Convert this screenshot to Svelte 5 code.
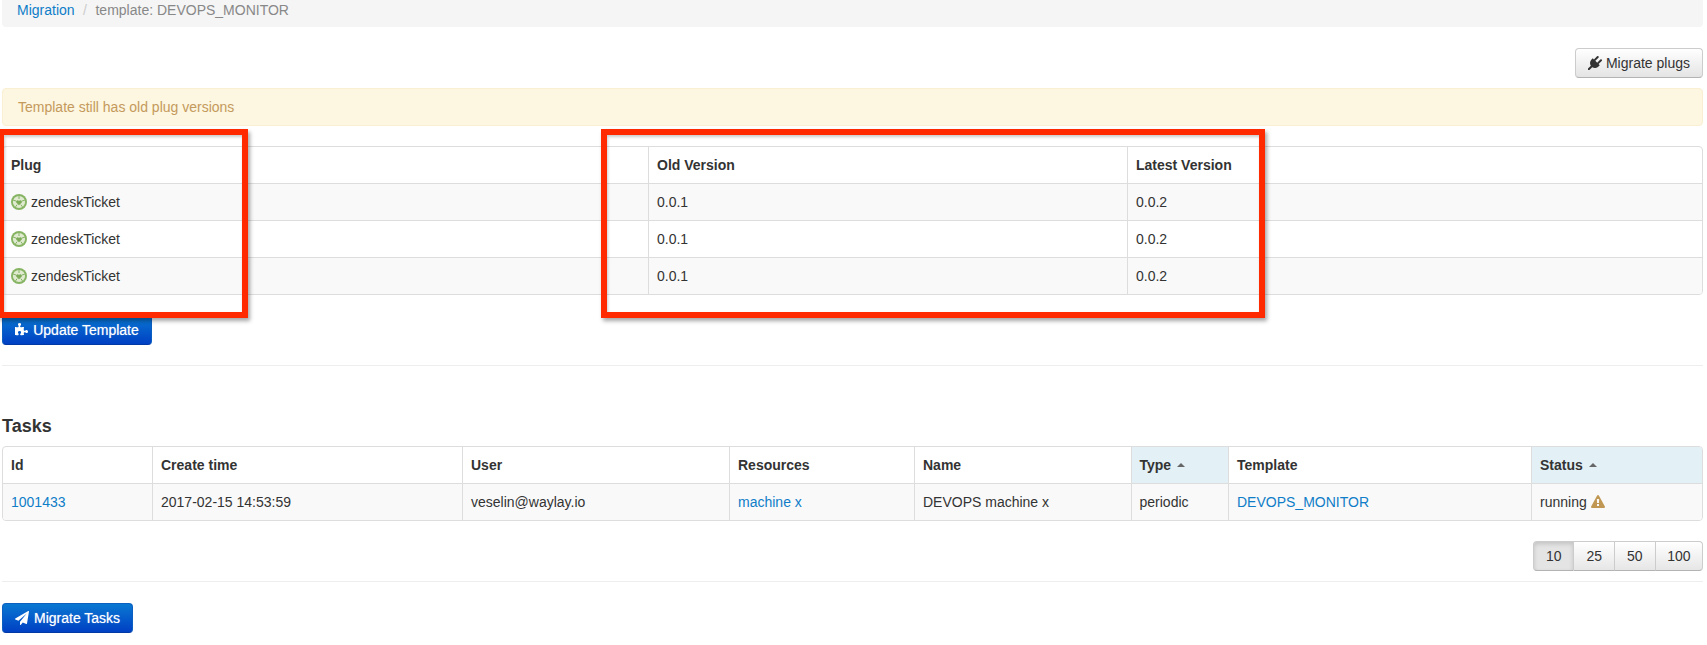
<script>
  const plugRows = [1, 2, 3];
  const plugIcon = "M1755 453q37 38 37 90.5t-37 90.5l-401 400 150 150-160 160q-163 163-389.5 186.5t-411.5-100.5l-362 362h-181v-181l362-362q-124-185-100.5-411.5t186.5-389.5l160-160 150 150 400-401q38-37 91-37t90 37 37 90.5-37 90.5l-400 401 234 234 401-400q38-37 91-37t90 37z";
  const puzzleIcon = "M1664 1098q0 81-44.5 135t-123.5 54q-41 0-77.5-17.5t-59-38-56.5-38-71-17.5q-110 0-110 124 0 39 16 115t15 115v5q-22 0-33 1-34 3-97.5 11.5t-115.5 13.5-98 5q-61 0-103-26.5t-42-83.5q0-37 17.5-71t38-56.5 38-59 17.5-77.5q0-79-54-123.5t-135-44.5q-84 0-143 45.5t-59 127.5q0 43 15 83t33.5 64.5 33.5 53 15 50.5q0 45-46 89-37 35-117 35-95 0-245-24-9-2-27.5-4t-27.5-4l-13-2q-1 0-3-1-2 0-2-1v-1024q2 1 17.5 3.5t34 5 21.5 3.5q150 24 245 24 80 0 117-35 46-44 46-89 0-22-15-50.5t-33.5-53-33.5-64.5-15-83q0-82 59-127.5t144-45.5q80 0 134 44.5t54 123.5q0 41-17.5 77.5t-38 59-38 56.5-17.5 71q0 57 42 83.5t103 26.5q64 0 180-15t163-17v2q-1 2-3.5 17.5t-5 34-3.5 21.5q-24 150-24 245 0 80 35 117 44 46 89 46 22 0 50.5-15t53-33.5 64.5-33.5 83-15q82 0 127.5 59t45.5 143z";
  const planeIcon = "M1764 11q33 24 27 64l-256 1536q-5 29-32 45-14 8-31 8-11 0-24-5l-453-185-242 295q-18 23-49 23-13 0-22-4-19-7-30.5-23.5t-11.5-36.5v-349l864-1059-1069 925-395-162q-37-14-40-55-2-40 32-59l1664-960q15-9 32-9 20 0 36 11z";
  const warnIcon = "M1024 1375v-190q0-14-9.5-23.5t-22.5-9.5h-192q-13 0-22.5 9.5t-9.5 23.5v190q0 14 9.5 23.5t22.5 9.5h192q13 0 22.5-9.5t9.5-23.5zm-2-374l18-459q0-12-10-19-13-11-24-11h-220q-11 0-24 11-10 7-10 21l17 457q0 10 10 16.5t24 6.5h185q14 0 23.5-6.5t10.5-16.5zm-14-934l768 1408q35 63-2 126-17 29-46.5 46t-63.5 17h-1536q-34 0-63.5-17t-46.5-46q-37-63-2-126l768-1408q17-31 47-49t65-18 65 18 47 49z";
</script>

<div class="page">
  <nav class="crumb">
    <a href="#m">Migration</a><span class="sep">/</span><span class="cur">template: DEVOPS_MONITOR</span>
  </nav>

  <div class="toolbar">
    <button class="btn">
      <svg class="ico" viewBox="0 0 1792 1792"><path d={plugIcon} fill="#333" /></svg>
      Migrate plugs
    </button>
  </div>

  <div class="alert">Template still has old plug versions</div>

  <div class="tbl plugs">
    <table>
      <colgroup><col class="p1" /><col class="p2" /><col /></colgroup>
      <thead><tr><th>Plug</th><th>Old Version</th><th>Latest Version</th></tr></thead>
      <tbody>
        {#each plugRows as r (r)}
          <tr>
            <td>
              <div class="plugname">
                <svg class="plugico" viewBox="0 0 16 16">
                  <circle cx="8" cy="8" r="8" fill="#86b463" />
                  <circle cx="8" cy="8" r="6.1" fill="#dfead0" />
                  <path d="M8 1.8V5M13.9 6.1 11 7M11.6 13 9.8 10.6M4.4 13l1.8-2.4M2.1 6.1 5 7" stroke="#86b463" stroke-width="1" fill="none" />
                  <path d="M8 11.2 5.2 8.4C4.4 6.8 6.8 5.4 8 7c1.2-1.6 3.6-.2 2.8 1.4z" fill="#7dab58" />
                </svg>
                zendeskTicket
              </div>
            </td>
            <td>0.0.1</td>
            <td>0.0.2</td>
          </tr>
        {/each}
      </tbody>
    </table>
  </div>

  <button class="btn primary update">
    <svg class="ico" viewBox="0 0 1792 1792"><path d={puzzleIcon} fill="#fff" /></svg>
    Update Template
  </button>

  <hr class="hr1" />

  <h4>Tasks</h4>

  <div class="tbl tasks">
    <table>
      <colgroup>
        <col class="t1" /><col class="t2" /><col class="t3" /><col class="t4" />
        <col class="t5" /><col class="t6" /><col class="t7" /><col />
      </colgroup>
      <thead>
        <tr>
          <th>Id</th><th>Create time</th><th>User</th><th>Resources</th><th>Name</th>
          <th class="sorted">Type <span class="caret"></span></th>
          <th>Template</th>
          <th class="sorted">Status <span class="caret"></span></th>
        </tr>
      </thead>
      <tbody>
        <tr>
          <td><a href="#t">1001433</a></td>
          <td>2017-02-15 14:53:59</td>
          <td>veselin@waylay.io</td>
          <td><a href="#r">machine x</a></td>
          <td>DEVOPS machine x</td>
          <td>periodic</td>
          <td><a href="#d">DEVOPS_MONITOR</a></td>
          <td>running <svg class="warn" viewBox="0 0 1792 1792"><path d={warnIcon} fill="#c09853" /></svg></td>
        </tr>
      </tbody>
    </table>
  </div>

  <div class="pager">
    <div class="group">
      <button class="pg active">10</button><button class="pg">25</button><button class="pg">50</button><button class="pg">100</button>
    </div>
  </div>

  <hr class="hr2" />

  <button class="btn primary tasksbtn">
    <svg class="ico" viewBox="0 0 1792 1792"><path d={planeIcon} fill="#fff" /></svg>
    Migrate Tasks
  </button>

  <div class="mark m1"></div>
  <div class="mark m2"></div>
</div>

<style>
  :global(body) {
    margin: 0;
    background: #fff;
    overflow: hidden;
  }
  .page {
    position: relative;
    box-sizing: border-box;
    width: 1707px;
    height: 645px;
    padding: 0 4px 0 2px;
    overflow: hidden;
    font-family: "Liberation Sans", Arial, sans-serif;
    font-size: 14px;
    line-height: 20px;
    color: #333;
  }
  a {
    color: #0f7dc8;
    text-decoration: none;
  }
  .crumb {
    height: 20px;
    padding: 0 15px 7px;
    background: #f5f5f5;
    border-radius: 0 0 4px 4px;
  }
  .sep {
    padding: 0 8.5px;
    color: #ccc;
  }
  .cur {
    color: #888;
  }
  .toolbar {
    display: flex;
    justify-content: flex-end;
    margin-top: 21px;
  }
  .btn {
    display: inline-flex;
    align-items: center;
    justify-content: center;
    gap: 4px;
    box-sizing: border-box;
    height: 30px;
    padding: 0 12px;
    font: inherit;
    white-space: nowrap;
    color: #333;
    background: linear-gradient(#fff, #e4e4e4);
    border: 1px solid #ccc;
    border-bottom-color: #b3b3b3;
    border-radius: 4px;
  }
  .btn.primary {
    color: #fff;
    font-weight: 400;
    background: linear-gradient(#0a78d2, #0040c4);
    border-color: #0a5fc0 #0a5fc0 #0038a8;
    text-shadow: 0 0 1px rgba(255, 255, 255, 0.6);
  }
  .tasksbtn {
    gap: 5px;
  }
  .ico {
    width: 14px;
    height: 14px;
    flex: none;
  }
  .alert {
    box-sizing: border-box;
    height: 38px;
    margin-top: 10px;
    padding: 8px 15px;
    color: #c49a5c;
    background: #fdf6e0;
    border: 1px solid #faefd3;
    border-radius: 4px;
  }
  .tbl {
    border: 1px solid #ddd;
    border-radius: 4px;
    overflow: hidden;
  }
  .plugs {
    margin-top: 20px;
  }
  table {
    width: 100%;
    table-layout: fixed;
    border-collapse: separate;
    border-spacing: 0;
  }
  th,
  td {
    box-sizing: content-box;
    padding: 8px;
    text-align: left;
    height: 20px;
    white-space: nowrap;
    vertical-align: top;
  }
  th {
    font-weight: 700;
  }
  th + th,
  td + td {
    border-left: 1px solid #ddd;
  }
  td {
    border-top: 1px solid #ddd;
  }
  tbody tr:nth-child(odd) td {
    background: #f9f9f9;
  }
  .p1 {
    width: 645px;
  }
  .p2 {
    width: 479px;
  }
  .plugname {
    display: flex;
    align-items: center;
    gap: 4px;
    height: 20px;
  }
  .plugico {
    width: 16px;
    height: 16px;
    flex: none;
  }
  .update {
    margin-top: 20px;
    width: 150px;
    display: flex;
  }
  hr {
    border: 0;
    border-top: 1px solid #eee;
    margin: 0;
  }
  .hr1 {
    margin-top: 20px;
  }
  h4 {
    margin: 50px 0 10px;
    font-size: 18px;
    line-height: 20px;
    font-weight: 700;
    color: #333;
  }
  .t1 {
    width: 149px;
  }
  .t2 {
    width: 310px;
  }
  .t3 {
    width: 267px;
  }
  .t4 {
    width: 185px;
  }
  .t5 {
    width: 216.5px;
  }
  .t6 {
    width: 97.5px;
  }
  .t7 {
    width: 303px;
  }
  th.sorted {
    background: #e3f0f6;
  }
  .caret {
    display: inline-block;
    width: 0;
    height: 0;
    margin-left: 2px;
    vertical-align: 3px;
    border-left: 4px solid transparent;
    border-right: 4px solid transparent;
    border-bottom: 4px solid #666;
  }
  .warn {
    width: 14px;
    height: 14px;
    vertical-align: -2px;
  }
  .pager {
    display: flex;
    justify-content: flex-end;
    margin-top: 20px;
  }
  .group {
    display: flex;
  }
  .pg {
    box-sizing: border-box;
    height: 30px;
    padding: 0 12px;
    font: inherit;
    color: #333;
    background: linear-gradient(#fff, #e6e6e6);
    border: 1px solid #ccc;
    border-bottom-color: #b3b3b3;
    border-left-width: 0;
  }
  .pg:first-child {
    border-left-width: 1px;
    border-radius: 4px 0 0 4px;
  }
  .pg:last-child {
    border-radius: 0 4px 4px 0;
    padding: 0 11.5px;
  }
  .pg.active {
    background: #e4e4e4;
    box-shadow: inset 0 2px 4px rgba(0, 0, 0, 0.15);
  }
  .hr2 {
    margin: 10px 0 21px;
  }
  .mark {
    position: absolute;
    box-sizing: border-box;
    top: 129px;
    height: 189px;
    border: 6px solid #ff2a00;
    box-shadow: 2px 3px 4px rgba(0, 0, 0, 0.35), inset 1px 2px 3px rgba(0, 0, 0, 0.2);
  }
  .m1 {
    left: -2px;
    width: 250px;
  }
  .m2 {
    left: 601px;
    width: 664px;
  }
</style>
